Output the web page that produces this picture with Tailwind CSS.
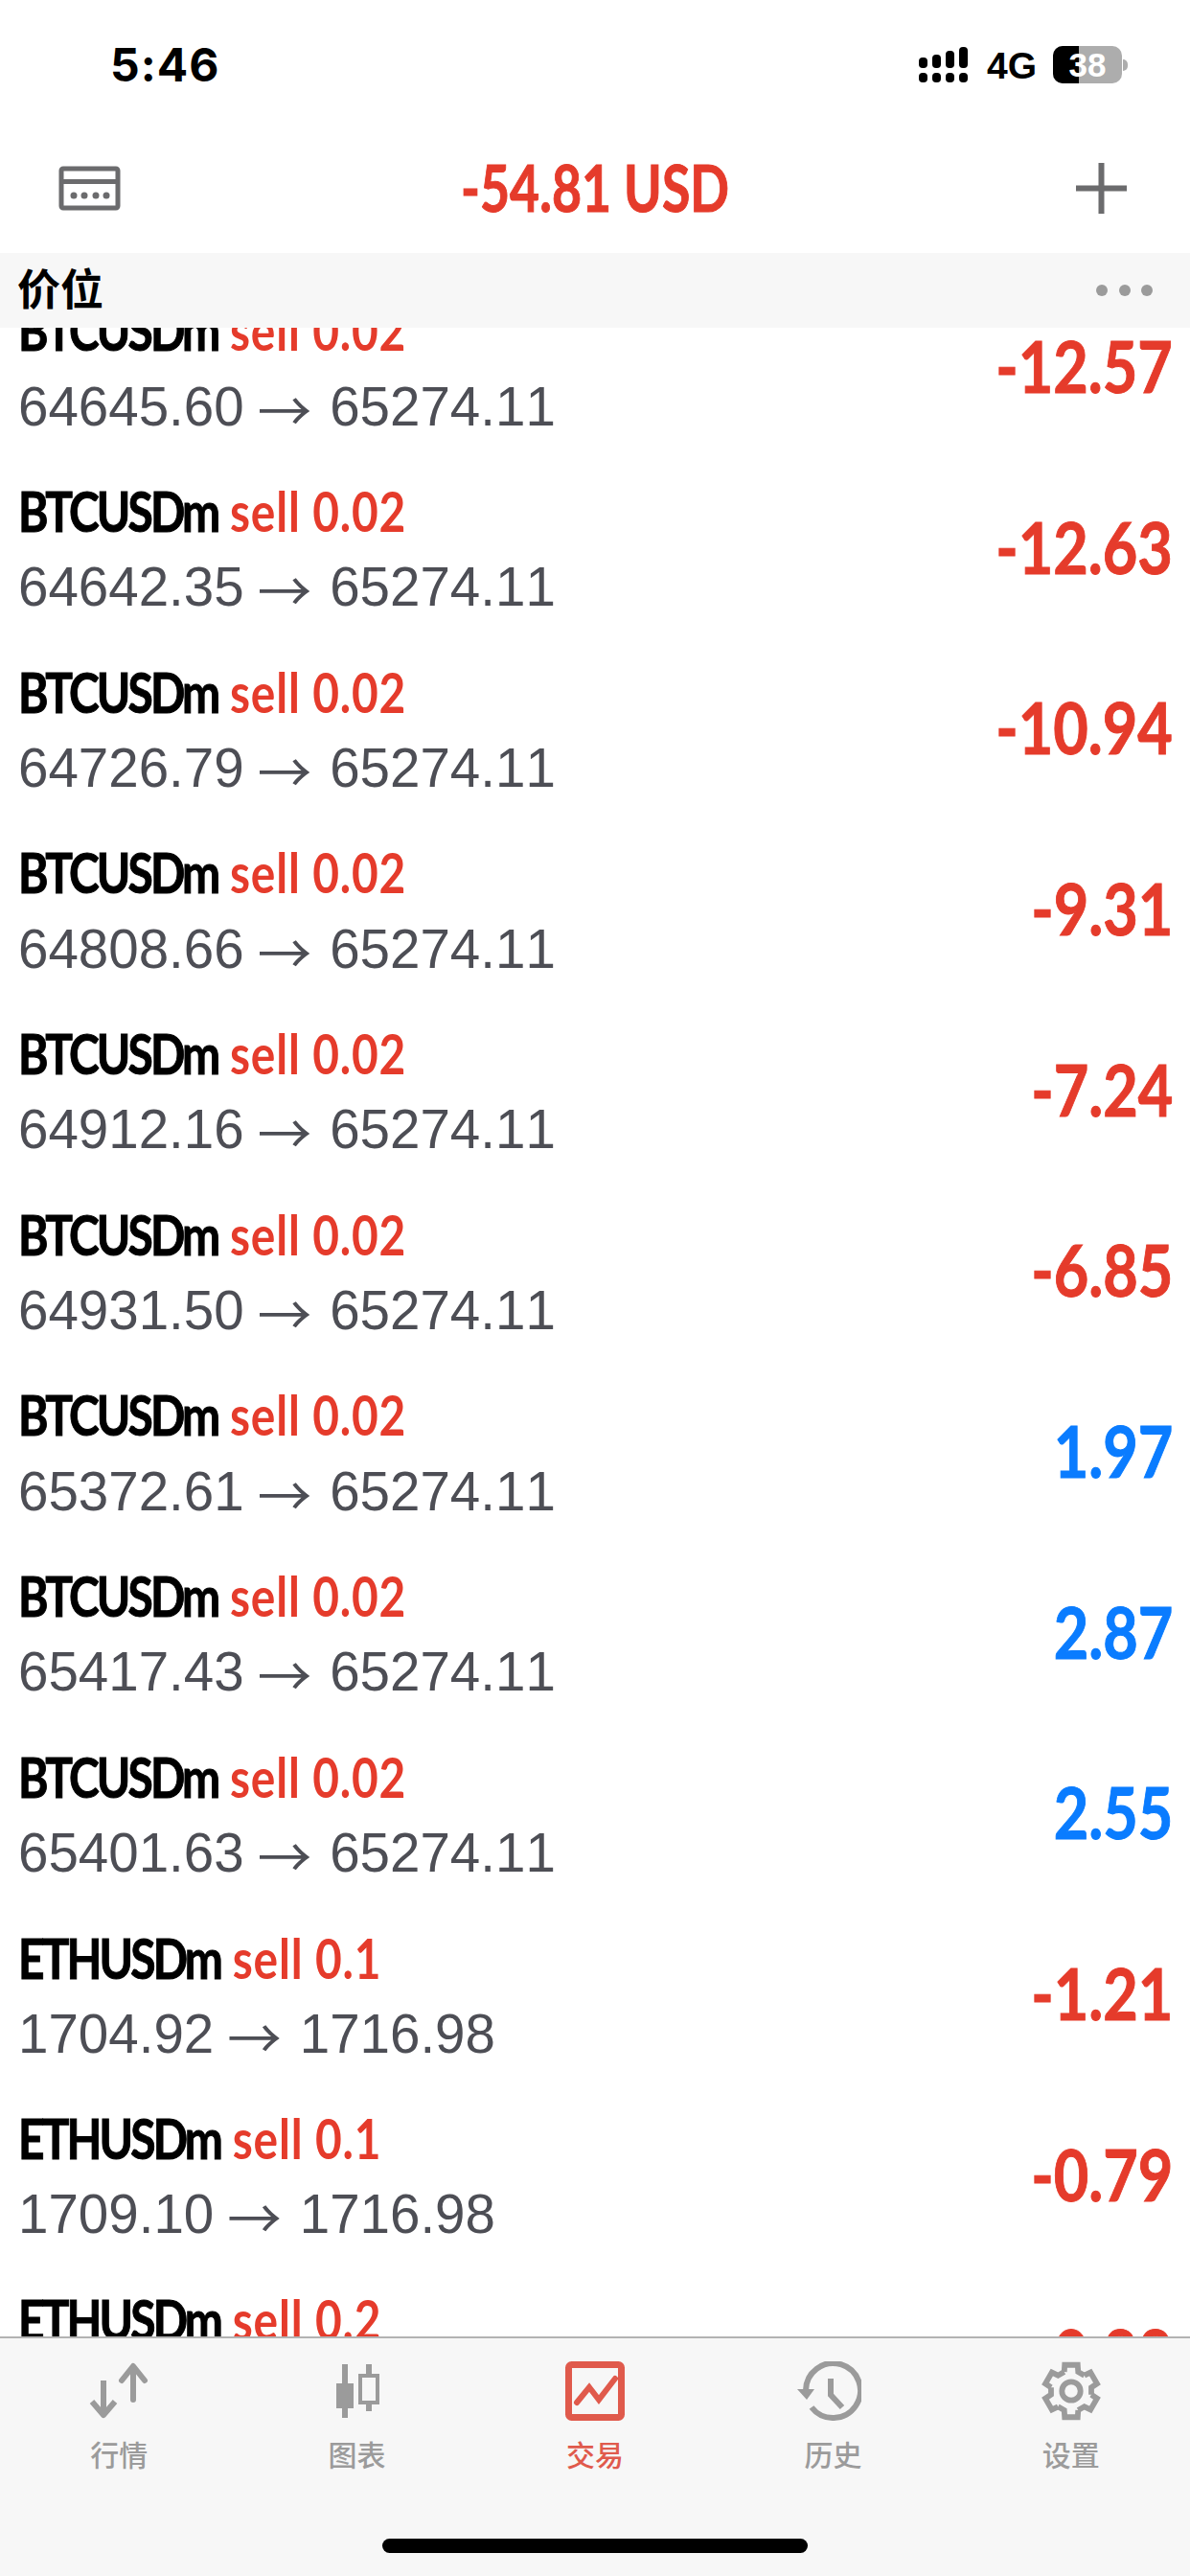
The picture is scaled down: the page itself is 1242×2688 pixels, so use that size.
<!DOCTYPE html>
<html lang="zh">
<head>
  <meta charset="UTF-8">
  <title>交易</title>
  <script src="https://cdn.jsdelivr.net/npm/@tailwindcss/browser@4"></script>
</head>
<body class="bg-white">
  <div class="w-[1242px] h-[2688px] flex flex-col overflow-hidden bg-white font-['Liberation_Sans','Noto_Sans_CJK_SC',sans-serif]">

    <!-- status bar -->
    <div class="h-[132px] shrink-0 relative">
      <span class="absolute left-[115px] top-[41px] text-[48px] leading-[54px] font-['Inter',sans-serif] font-bold text-black tracking-[1px]">5:46</span>
      <svg class="absolute left-[959px] top-[49px]" width="52" height="37" viewBox="0 0 52 37" fill="#000">
        <rect x="0" y="11" width="9" height="11" rx="4"/><rect x="14" y="8" width="9" height="14" rx="4"/><rect x="28" y="4" width="9" height="18" rx="4"/><rect x="42" y="0" width="9" height="22" rx="4"/>
        <rect x="0" y="27" width="9" height="10" rx="4"/><rect x="14" y="27" width="9" height="10" rx="4"/><rect x="28" y="27" width="9" height="10" rx="4"/><rect x="42" y="27" width="9" height="10" rx="4"/>
      </svg>
      <span class="absolute left-[1030px] top-[49px] text-[39px] leading-[40px] font-bold text-black">4G</span>
      <div class="absolute left-[1099px] top-[48px] w-[72px] h-[39px] rounded-[10px] overflow-hidden flex bg-[#adadad]">
        <div class="w-[27px] bg-black"></div>
      </div>
      <div class="absolute left-[1172px] top-[62px] w-[5px] h-[12px] rounded-r-full bg-[#adadad]"></div>
      <span class="absolute left-[1099px] top-[48px] w-[72px] h-[39px] text-center text-[35px] leading-[39px] font-bold text-white">38</span>
    </div>

    <!-- title bar -->
    <div class="h-[132px] shrink-0 relative flex items-center justify-center">
      <svg class="absolute left-[61px] top-[41px]" width="65" height="47" viewBox="0 0 65 47">
        <rect x="3" y="3" width="59" height="41" rx="2" fill="none" stroke="#6b6b6d" stroke-width="5"/>
        <rect x="3" y="14" width="59" height="5" fill="#6b6b6d"/>
        <circle cx="16" cy="31" r="3.5" fill="#6b6b6d"/><circle cx="27" cy="31" r="3.5" fill="#6b6b6d"/><circle cx="39" cy="31" r="3.5" fill="#6b6b6d"/><circle cx="50" cy="31" r="3.5" fill="#6b6b6d"/>
      </svg>
      <span class="text-[#e53b2b] text-[67px] leading-none font-['Lato',sans-serif] font-bold whitespace-nowrap scale-x-[0.8] mt-[-5px] [-webkit-text-stroke:1px]">-54.81 USD</span>
      <svg class="absolute left-[1123px] top-[38px]" width="53" height="53" viewBox="0 0 53 53" fill="#6b6b6d">
        <rect x="0" y="23.5" width="53" height="6"/><rect x="23.5" y="0" width="6" height="53"/>
      </svg>
    </div>

    <!-- section header -->
    <div class="h-[78px] shrink-0 bg-[#f7f7f7] flex items-center justify-between pl-[18px] pr-[39px] relative z-10">
      <span class="text-[45px] leading-none font-bold text-black">价位</span>
      <div class="flex gap-[11.5px]">
        <span class="w-[12px] h-[12px] rounded-full bg-[#9b9b9b]"></span>
        <span class="w-[12px] h-[12px] rounded-full bg-[#9b9b9b]"></span>
        <span class="w-[12px] h-[12px] rounded-full bg-[#9b9b9b]"></span>
      </div>
    </div>

    <!-- positions list -->
    <div class="flex-1 min-h-0 overflow-hidden">
      <div id="rows" class="mt-[-55px]"></div>
    </div>

    <!-- tab bar -->
    <div class="h-[250px] shrink-0 bg-[#f7f7f7] border-t-2 border-[#b3b3b3] relative">
      <div class="grid grid-cols-5 pt-[24px]">
        <div class="flex flex-col items-center">
          <svg width="62" height="62" viewBox="0 0 62 62" fill="none" stroke="#9b9b9b" stroke-width="6" stroke-linecap="round" stroke-linejoin="round">
            <path d="M15 20V56M3 42L15 56L27 42" stroke-linecap="butt"/>
            <path d="M46 40V6M34 20L46 5L58 20"/>
          </svg>
          <span class="mt-[21px] text-[30px] leading-[32px] font-medium text-[#9b9b9b]">行情</span>
        </div>
        <div class="flex flex-col items-center">
          <svg width="62" height="62" viewBox="0 0 62 62">
            <rect x="15" y="3" width="6" height="56" fill="#9b9b9b"/>
            <rect x="9" y="23" width="18" height="26" fill="#9b9b9b"/>
            <rect x="40" y="3" width="6" height="49" fill="#9b9b9b"/>
            <rect x="34" y="15" width="18" height="28" fill="#f7f7f7" stroke="#9b9b9b" stroke-width="4"/>
          </svg>
          <span class="mt-[21px] text-[30px] leading-[32px] font-medium text-[#9b9b9b]">图表</span>
        </div>
        <div class="flex flex-col items-center">
          <svg width="62" height="62" viewBox="0 0 62 62" fill="none" stroke="#e05a4c">
            <rect x="3.5" y="3.5" width="55" height="55" rx="3" stroke-width="7"/>
            <path d="M12 43L25 27L35 40L52 18" stroke-width="6" stroke-linecap="round" stroke-linejoin="miter"/>
          </svg>
          <span class="mt-[21px] text-[30px] leading-[32px] font-medium text-[#e05a4c]">交易</span>
        </div>
        <div class="flex flex-col items-center">
          <svg class="mr-[8px]" width="68" height="62" viewBox="0 0 68 62" fill="none">
            <path d="M10 31A28.500 28.500 0 1 1 16 48" stroke="#9b9b9b" stroke-width="6"/>
            <path d="M1 29L19 29L11 40Z" fill="#9b9b9b"/>
            <path d="M36 18V35L48 48" stroke="#9b9b9b" stroke-width="6"/>
          </svg>
          <span class="mt-[21px] text-[30px] leading-[32px] font-medium text-[#9b9b9b]">历史</span>
        </div>
        <div class="flex flex-col items-center">
          <svg width="62" height="62" viewBox="0 0 64 64" fill="none" stroke="#9b9b9b" stroke-width="6">
            <polyline points="24.500,11.300 25,3.900 39,3.900 39.500,11.300 46.200,15.150"/>
            <polyline points="24.500,11.300 25,3.900 39,3.900 39.500,11.300 46.200,15.150" transform="rotate(60 32 32)"/>
            <polyline points="24.500,11.300 25,3.900 39,3.900 39.500,11.300 46.200,15.150" transform="rotate(120 32 32)"/>
            <polyline points="24.500,11.300 25,3.900 39,3.900 39.500,11.300 46.200,15.150" transform="rotate(180 32 32)"/>
            <polyline points="24.500,11.300 25,3.900 39,3.900 39.500,11.300 46.200,15.150" transform="rotate(240 32 32)"/>
            <polyline points="24.500,11.300 25,3.900 39,3.900 39.500,11.300 46.200,15.150" transform="rotate(300 32 32)"/>
            <circle cx="32" cy="32" r="10"/>
          </svg>
          <span class="mt-[21px] text-[30px] leading-[32px] font-medium text-[#9b9b9b]">设置</span>
        </div>
      </div>
      <div class="absolute left-[399px] top-[209px] w-[444px] h-[15px] rounded-full bg-black"></div>
    </div>
  </div>

  <script>
    // Positions affichées dans la liste
    const positions = [
      ['BTCUSDm', 'sell 0.02', '64645.60', '65274.11', '-12.57'],
      ['BTCUSDm', 'sell 0.02', '64642.35', '65274.11', '-12.63'],
      ['BTCUSDm', 'sell 0.02', '64726.79', '65274.11', '-10.94'],
      ['BTCUSDm', 'sell 0.02', '64808.66', '65274.11', '-9.31'],
      ['BTCUSDm', 'sell 0.02', '64912.16', '65274.11', '-7.24'],
      ['BTCUSDm', 'sell 0.02', '64931.50', '65274.11', '-6.85'],
      ['BTCUSDm', 'sell 0.02', '65372.61', '65274.11', '1.97'],
      ['BTCUSDm', 'sell 0.02', '65417.43', '65274.11', '2.87'],
      ['BTCUSDm', 'sell 0.02', '65401.63', '65274.11', '2.55'],
      ['ETHUSDm', 'sell 0.1', '1704.92', '1716.98', '-1.21'],
      ['ETHUSDm', 'sell 0.1', '1709.10', '1716.98', '-0.79'],
      ['ETHUSDm', 'sell 0.2', '1712.50', '1716.98', '-0.88'],
    ];
    document.getElementById('rows').innerHTML = positions.map(([symbol, side, open, last, profit]) => `
      <div class="h-[188.7px] flex items-center justify-between pl-[19px] pr-[18px]">
        <div>
          <div class="h-[84px] mt-[2px] flex items-center gap-[15px] text-[57px] leading-none font-['Lato',sans-serif] font-bold whitespace-nowrap origin-left scale-x-[0.84]"><span class="text-black tracking-[-3.4px] [-webkit-text-stroke:1px]">${symbol}</span><span class="text-[#e53b2b] tracking-[1px]">${side}</span></div>
          <div class="h-[74px] mt-[1px] flex items-center gap-[14px] text-[56.5px] leading-none text-[#4d4e55] whitespace-nowrap [font-kerning:none]"><span>${open}</span><span class="font-['Noto_Sans_CJK_SC',sans-serif] mr-[5px]">→</span><span>${last}</span></div>
        </div>
        <span class="${profit.startsWith('-') ? 'text-[#e53b2b]' : 'text-[#0a7cff]'} text-[75px] leading-none font-['Lato',sans-serif] font-bold origin-right scale-x-[0.84] [-webkit-text-stroke:1px]">${profit}</span>
      </div>`).join('');
  </script>
</body>
</html>
